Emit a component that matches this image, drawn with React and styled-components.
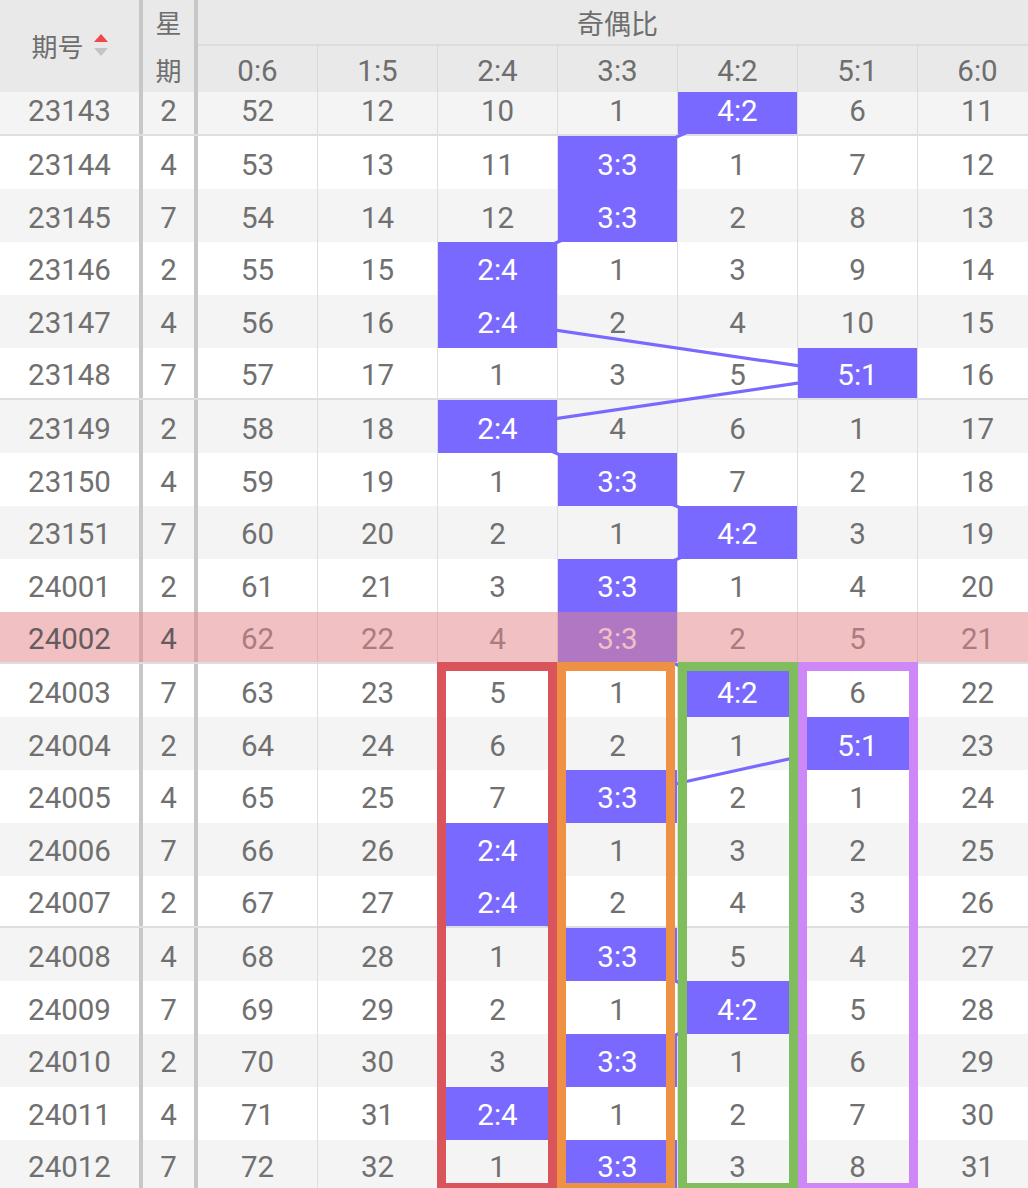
import React from 'react';
import styled, { createGlobalStyle } from 'styled-components';

const ROW_H = 52.8;
const OFFSET = -8.4;
const FIXED_W = 198;
const COLS = ['0:6', '1:5', '2:4', '3:3', '4:2', '5:1', '6:0'];
const COL_W = [119, 120, 120, 120, 120, 120, 120];
const colLeft = (i) => COL_W.slice(0, i).reduce((a, b) => a + b, 0);
const colCenter = (i) => colLeft(i) + COL_W[i] / 2;
const PURPLE = '#7a69fe';

const rows = [
  ['23143', 2, [52, 12, 10, 1, '4:2', 6, 11]],
  ['23144', 4, [53, 13, 11, '3:3', 1, 7, 12]],
  ['23145', 7, [54, 14, 12, '3:3', 2, 8, 13]],
  ['23146', 2, [55, 15, '2:4', 1, 3, 9, 14]],
  ['23147', 4, [56, 16, '2:4', 2, 4, 10, 15]],
  ['23148', 7, [57, 17, 1, 3, 5, '5:1', 16]],
  ['23149', 2, [58, 18, '2:4', 4, 6, 1, 17]],
  ['23150', 4, [59, 19, 1, '3:3', 7, 2, 18]],
  ['23151', 7, [60, 20, 2, 1, '4:2', 3, 19]],
  ['24001', 2, [61, 21, 3, '3:3', 1, 4, 20]],
  ['24002', 4, [62, 22, 4, '3:3', 2, 5, 21]],
  ['24003', 7, [63, 23, 5, 1, '4:2', 6, 22]],
  ['24004', 2, [64, 24, 6, 2, 1, '5:1', 23]],
  ['24005', 4, [65, 25, 7, '3:3', 2, 1, 24]],
  ['24006', 7, [66, 26, '2:4', 1, 3, 2, 25]],
  ['24007', 2, [67, 27, '2:4', 2, 4, 3, 26]],
  ['24008', 4, [68, 28, 1, '3:3', 5, 4, 27]],
  ['24009', 7, [69, 29, 2, 1, '4:2', 5, 28]],
  ['24010', 2, [70, 30, 3, '3:3', 1, 6, 29]],
  ['24011', 4, [71, 31, '2:4', 1, 2, 7, 30]],
  ['24012', 7, [72, 32, 1, '3:3', 3, 8, 31]],
];

const PINK_ROW = 10;

const boxes = [
  { left: 239, width: 120, color: '#d9555b' },
  { left: 359, width: 118, color: '#ee9144' },
  { left: 480, width: 120, color: '#80bd5c' },
  { left: 600, width: 120, color: '#cd87f6' },
];

const GlobalStyle = createGlobalStyle`
  html, body { margin: 0; padding: 0; background: #fff; overflow: hidden; }
  body { font-family: Roboto, "Noto Sans CJK SC", sans-serif; }
`;

const Page = styled.div`
  width: 1028px;
  height: 1188px;
  overflow: hidden;
  background: #fff;
`;

const Table = styled.div`
  width: 1037px;
  display: flex;
  flex-direction: column;
`;

const Header = styled.div`
  display: flex;
  height: 92px;
  background: #e9e9e9;
  color: #6e6e6e;
`;

const Sep = styled.div`
  width: 4px;
  flex: none;
  align-self: stretch;
  background: #c7c7c7;
`;

const HeadFixed = styled.div`
  width: ${(p) => p.$w}px;
  flex: none;
  display: flex;
  flex-direction: ${(p) => (p.$stack ? 'column' : 'row')};
  align-items: center;
  justify-content: center;
  gap: ${(p) => (p.$stack ? '0' : '10px')};
  font-family: "Noto Sans CJK SC", sans-serif;
  font-size: 26px;
  line-height: ${(p) => (p.$stack ? '48px' : '1')};
`;

const SortIcon = styled.svg`
  width: 14px;
  height: 22px;
  flex: none;
  margin-top: -2px;
`;

const HeadGroup = styled.div`
  flex: 1;
  display: flex;
  flex-direction: column;
`;

const GroupTitle = styled.div`
  height: 44px;
  border-bottom: 2px solid #dcdcdc;
  display: flex;
  align-items: center;
  justify-content: center;
  font-family: "Noto Sans CJK SC", sans-serif;
  font-size: 27px;
`;

const SubRow = styled.div`
  flex: 1;
  display: flex;
`;

const SubCell = styled.div`
  width: ${(p) => p.$w}px;
  flex: none;
  box-sizing: border-box;
  border-left: ${(p) => (p.$first ? 'none' : '1px solid #d8d8d8')};
  display: flex;
  align-items: center;
  justify-content: center;
  font-size: 29.5px;
  padding-top: 3px;
`;

const Body = styled.div`
  position: relative;
  height: 1096px;
  overflow: hidden;
`;

const Rows = styled.div`
  display: flex;
  flex-direction: column;
  margin-top: ${OFFSET}px;
`;

const Row = styled.div`
  position: relative;
  display: flex;
  height: ${ROW_H}px;
  box-sizing: border-box;
  flex: none;
  background: ${(p) => (p.$pink ? '#fff' : p.$alt ? '#f4f4f4' : '#fff')};
  border-bottom: ${(p) => (p.$divider ? '2px solid #dedede' : 'none')};
  color: #707070;
  font-size: 29.5px;
`;

const FixedCell = styled.div`
  width: ${(p) => p.$w}px;
  flex: none;
  display: flex;
  align-items: center;
  justify-content: center;
  padding-top: 4px;
  position: ${(p) => (p.$raised ? 'relative' : 'static')};
  z-index: ${(p) => (p.$raised ? 5 : 'auto')};
  color: ${(p) => (p.$raised ? '#665c5e' : 'inherit')};
`;

const Cell = styled.div`
  width: ${(p) => p.$w}px;
  flex: none;
  box-sizing: border-box;
  border-left: ${(p) => (p.$first ? 'none' : '1px solid #dedede')};
  display: flex;
  align-items: stretch;
`;

const CellInner = styled.div`
  flex: 1;
  display: flex;
  align-items: center;
  justify-content: center;
  padding-top: 4px;
  ${(p) =>
    p.$hit &&
    `
    position: relative;
    z-index: 2;
    background: ${PURPLE};
    color: #fff;
  `}
`;

const PinkOverlay = styled.div`
  position: absolute;
  inset: 0;
  z-index: 4;
  background: rgba(226, 134, 138, 0.52);
  pointer-events: none;
`;

const LineLayer = styled.svg`
  position: absolute;
  left: ${FIXED_W}px;
  top: ${OFFSET}px;
  z-index: 1;
  pointer-events: none;
  overflow: visible;
`;

const Box = styled.div`
  position: absolute;
  box-sizing: border-box;
  z-index: 3;
  border: 9px solid ${(p) => p.$color};
  pointer-events: none;
`;

export default function App() {
  const points = rows.map((r, i) => {
    const hit = r[2].findIndex((v) => typeof v === 'string');
    return [colCenter(hit), i * ROW_H + ROW_H / 2];
  });
  const boxTop = OFFSET + 11 * ROW_H - 2;
  const boxHeight = 10 * ROW_H + 2;

  return (
    <Page>
      <GlobalStyle />
      <Table>
        <Header>
          <HeadFixed $w={139}>
            <span>期号</span>
            <SortIcon viewBox="0 0 14 22">
              <polygon points="7,0 14,8 0,8" fill="#f04747" />
              <polygon points="0,14 14,14 7,22" fill="#c4c4c4" />
            </SortIcon>
          </HeadFixed>
          <Sep />
          <HeadFixed $w={51} $stack>
            <span>星</span>
            <span>期</span>
          </HeadFixed>
          <Sep />
          <HeadGroup>
            <GroupTitle>奇偶比</GroupTitle>
            <SubRow>
              {COLS.map((c, i) => (
                <SubCell key={c} $w={COL_W[i]} $first={i === 0}>
                  {c}
                </SubCell>
              ))}
            </SubRow>
          </HeadGroup>
        </Header>
        <Body>
          <Rows>
            {rows.map((r, i) => {
              const pink = i === PINK_ROW;
              return (
                <Row
                  key={r[0]}
                  $alt={i % 2 === 0}
                  $pink={pink}
                  $divider={i % 5 === 0}
                >
                  <FixedCell $w={139} $raised={pink}>{r[0]}</FixedCell>
                  <Sep />
                  <FixedCell $w={51} $raised={pink}>{r[1]}</FixedCell>
                  <Sep />
                  {r[2].map((v, j) => (
                    <Cell key={j} $w={COL_W[j]} $first={j === 0}>
                      <CellInner $hit={typeof v === 'string'}>{v}</CellInner>
                    </Cell>
                  ))}
                  {pink && <PinkOverlay />}
                </Row>
              );
            })}
          </Rows>
          <LineLayer width={839} height={rows.length * ROW_H}>
            <polyline
              points={points.map((p) => p.join(',')).join(' ')}
              fill="none"
              stroke={PURPLE}
              strokeWidth="3.2"
              strokeLinejoin="round"
            />
          </LineLayer>
          {boxes.map((b) => (
            <Box
              key={b.color}
              $color={b.color}
              style={{
                left: FIXED_W + b.left,
                top: boxTop,
                width: b.width,
                height: boxHeight,
              }}
            />
          ))}
        </Body>
      </Table>
    </Page>
  );
}
